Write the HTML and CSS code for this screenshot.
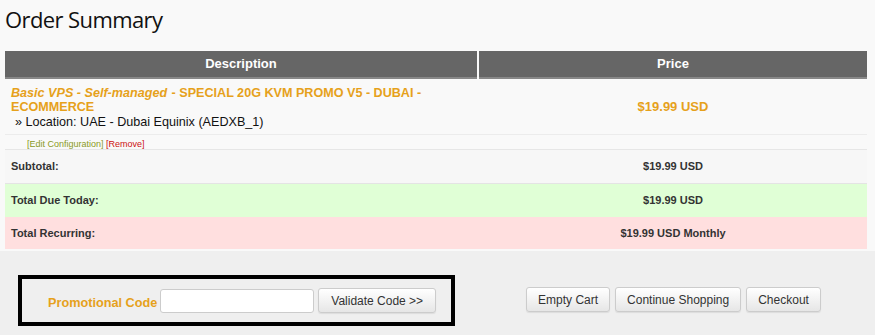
FILE: index.html
```html
<!DOCTYPE html>
<html>
<head>
<meta charset="utf-8">
<link rel="stylesheet" href="styles.css">
</head>
<body>
<div class="top">
  <h1 class="title">Order Summary</h1>
  <div class="cart">
    <div class="head">
      <div class="hcell">Description</div>
      <div class="hcell">Price</div>
    </div>
    <div class="row product">
      <div class="desc">
        <div class="pname"><em>Basic VPS - Self-managed</em> <span>- SPECIAL 20G KVM PROMO V5 - DUBAI - ECOMMERCE</span></div>
        <div class="loc">» Location: UAE - Dubai Equinix (AEDXB_1)</div>
      </div>
      <div class="pprice">$19.99 USD</div>
    </div>
    <div class="row editrow">
      <div class="links"><span class="edit">[Edit Configuration]</span> <span class="remove">[Remove]</span></div>
      <div></div>
    </div>
    <div class="row total subtotal">
      <div class="tl">Subtotal:</div>
      <div class="tv">$19.99 USD</div>
    </div>
    <div class="row total today">
      <div class="tl">Total Due Today:</div>
      <div class="tv">$19.99 USD</div>
    </div>
    <div class="row total recurring">
      <div class="tl">Total Recurring:</div>
      <div class="tv">$19.99 USD Monthly</div>
    </div>
  </div>
</div>
<div class="bottom">
  <div class="promo">
    <span class="plabel">Promotional Code</span>
    <input class="pinput" type="text">
    <button class="btn">Validate Code &gt;&gt;</button>
  </div>
  <div class="actions">
    <button class="btn">Empty Cart</button>
    <button class="btn">Continue Shopping</button>
    <button class="btn">Checkout</button>
  </div>
</div>
</body>
</html>
```

FILE: styles.css
```css
html, body {
  margin: 0;
  padding: 0;
}
body {
  background: #efefef;
  font-family: "Liberation Sans", Arial, sans-serif;
  color: #222;
  width: 875px;
  height: 335px;
  overflow: hidden;
}
.top {
  background: #f9f9f9;
  padding: 0 8px 2px 5px;
}
.title {
  margin: 0;
  padding: 3px 0 0 0;
  height: 48px;
  font-family: "Open Sans", sans-serif;
  font-weight: 400;
  font-size: 22px;
  line-height: 33px;
  color: #111;
  letter-spacing: -0.6px;
}
.cart {
  width: 862px;
}
.head {
  display: grid;
  grid-template-columns: 472px 1fr;
  column-gap: 2px;
}
.hcell {
  background: #666;
  color: #fff;
  font-weight: bold;
  font-size: 13px;
  text-align: center;
  height: 26px;
  line-height: 26px;
  border-bottom: 2px solid #888;
}
.row {
  display: grid;
  grid-template-columns: 474px 1fr;
}
.product {
  border-bottom: 1px solid #ececec;
  height: 55px;
}
.desc {
  padding: 7px 0 0 6px;
}
.pname {
  color: #e6a11b;
  font-weight: bold;
  font-size: 12.6px;
  line-height: 14px;
  width: 420px;
}
.pname em {
  font-style: italic;
  padding-right: 1px;
}
.loc {
  font-size: 12.6px;
  line-height: 14px;
  color: #111;
  padding: 1px 0 0 4px;
}
.pprice {
  color: #e6a11b;
  font-weight: bold;
  font-size: 13px;
  text-align: center;
  line-height: 55px;
}
.editrow {
  height: 14px;
  border-bottom: 1px solid #e6e6e6;
  font-size: 9px;
  line-height: 14px;
}
.links {
  padding: 2px 0 0 22px;
}
.edit {
  color: #8a9a1e;
}
.remove {
  color: #cc1111;
}
.total {
  height: 33px;
  line-height: 33px;
  font-size: 11px;
  font-weight: bold;
  color: #333;
  border-bottom: 1px solid #e4e4e4;
}
.total .tl {
  padding-left: 6px;
}
.total .tv {
  text-align: center;
}
.subtotal {
  background: #f7f7f7;
}
.today {
  background: #e0ffd6;
  border-bottom: none;
}
.recurring {
  background: #ffdfdf;
  border-bottom: none;
  height: 32px;
}
.bottom {
  display: grid;
  grid-template-columns: 474px 389px;
  padding: 24px 0 0 5px;
}
.promo {
  margin-left: 13px;
  height: 43px;
  border: 4px solid #000;
  display: flex;
  align-items: center;
  padding-left: 26px;
  box-sizing: content-box;
  width: 403px;
}
.plabel {
  color: #e6a11b;
  font-weight: bold;
  font-size: 12.7px;
  margin-right: 3px;
  padding-top: 4px;
}
.pinput {
  width: 154px;
  height: 24px;
  box-sizing: border-box;
  border: 1px solid #ccc;
  border-radius: 3px;
  background: #fff;
  margin: 0 4px 0 0;
  padding: 0;
}
.btn {
  font-family: "Liberation Sans", Arial, sans-serif;
  font-size: 12px;
  color: #333;
  height: 25px;
  padding: 0 12px;
  border: 1px solid #ccc;
  border-radius: 3px;
  background: linear-gradient(#ffffff, #e6e6e6);
  box-shadow: 0 1px 1px rgba(0,0,0,0.08);
  margin: 0;
}
.actions {
  display: flex;
  justify-content: center;
  gap: 5px;
  padding-top: 12px;
  align-items: flex-start;
}
.actions .btn {
  padding: 0 11px;
}
```
